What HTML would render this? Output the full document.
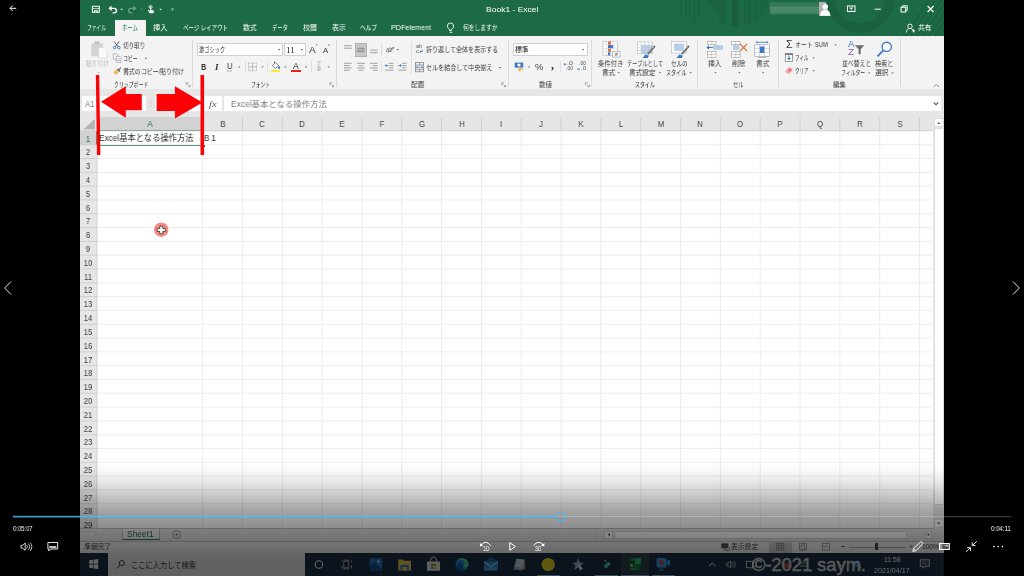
<!DOCTYPE html>
<html lang="ja"><head><meta charset="utf-8"><title>Book1 - Excel</title>
<style>
html,body{margin:0;padding:0;background:#000;}
body{width:1024px;height:576px;overflow:hidden;position:relative;font-family:'Liberation Sans','Noto Sans CJK JP',sans-serif;}
#x div,#x svg,#p svg,.ov{position:absolute;}
#x,#p{position:absolute;left:0;top:0;width:1024px;height:576px;overflow:hidden;}
#x{filter:blur(.35px);}
.t{position:absolute;white-space:nowrap;transform-origin:0 50%;will-change:transform;}
.ov{left:0;top:448px;width:1024px;height:128px;background:linear-gradient(to bottom,rgba(0,0,0,0) 10.9%,rgba(0,0,0,.025) 17.2%,rgba(0,0,0,.08) 25%,rgba(0,0,0,.17) 32.8%,rgba(0,0,0,.26) 40.6%,rgba(0,0,0,.345) 48.4%,rgba(0,0,0,.39) 53.1%,rgba(0,0,0,.445) 62.5%,rgba(0,0,0,.545) 77.3%,rgba(0,0,0,.585) 84.4%,rgba(0,0,0,.6) 90%,rgba(0,0,0,.6) 100%);}
</style></head>
<body>
<div id="x">
<div style="left:80px;top:0px;width:864px;height:36.3px;background:#1d6a47;"></div>
<div style="left:80px;top:36.3px;width:864px;height:52.4px;background:#f3f3f3;"></div>
<div style="left:80px;top:88.7px;width:864px;height:440.6px;background:#e6e6e6;"></div>
<div style="left:114.8px;top:19.5px;width:31.4px;height:17px;background:#f3f3f3;"></div>
<div style="left:819px;top:2px;width:12.2px;height:13.6px;background:#b4b4b4;"></div>
<div style="left:769.8px;top:2.3px;width:49.4px;height:13px;background:linear-gradient(to bottom,rgba(255,255,255,.07),rgba(255,255,255,.13) 40%,rgba(255,255,255,.2) 50%,rgba(255,255,255,.2) 70%,rgba(255,255,255,.1) 78%,rgba(255,255,255,.08));"></div>
<div style="left:769.8px;top:6.8px;width:49.4px;height:0.6px;background:rgba(255,255,255,.12);"></div>
<div style="left:769.8px;top:11.6px;width:49.4px;height:0.6px;background:rgba(255,255,255,.15);"></div>
<div style="left:192.0px;top:40px;width:1px;height:47px;background:#dadada;"></div>
<div style="left:197.3px;top:42.6px;width:86px;height:13.8px;background:#fff;box-sizing:border-box;border:.8px solid #d0d0d0;"></div>
<div style="left:284.2px;top:42.6px;width:22.3px;height:13.8px;background:#fff;box-sizing:border-box;border:.8px solid #d0d0d0;"></div>
<div style="left:245.1px;top:61px;width:1px;height:12px;background:#e0e0e0;"></div>
<div style="left:267.1px;top:61px;width:1px;height:12px;background:#e0e0e0;"></div>
<div style="left:270.5px;top:69.5px;width:9.5px;height:2.2px;background:#ffe83b;"></div>
<div style="left:291px;top:69.5px;width:9.5px;height:2.2px;background:#e8261a;"></div>
<div style="left:310.5px;top:61px;width:1px;height:12px;background:#e0e0e0;"></div>
<div style="left:336.4px;top:40px;width:1px;height:47px;background:#dadada;"></div>
<div style="left:354.7px;top:43.3px;width:12.3px;height:13.3px;background:#c8c8c8;box-sizing:border-box;border:1px solid #b0b0b0;"></div>
<div style="left:381.1px;top:43px;width:1px;height:13px;background:#e0e0e0;"></div>
<div style="left:381.1px;top:61px;width:1px;height:12px;background:#e0e0e0;"></div>
<div style="left:410.5px;top:42px;width:1px;height:32px;background:#e0e0e0;"></div>
<div style="left:507.7px;top:40px;width:1px;height:47px;background:#dadada;"></div>
<div style="left:513px;top:42.6px;width:74.5px;height:13.8px;background:#fff;box-sizing:border-box;border:.8px solid #d0d0d0;"></div>
<div style="left:559.8px;top:61px;width:1px;height:12px;background:#e0e0e0;"></div>
<div style="left:591.0px;top:40px;width:1px;height:47px;background:#dadada;"></div>
<div style="left:697.1px;top:40px;width:1px;height:47px;background:#dadada;"></div>
<div style="left:778.0px;top:40px;width:1px;height:47px;background:#dadada;"></div>
<div style="left:900.0px;top:39px;width:1px;height:48px;background:#dadada;"></div>
<div style="left:82.3px;top:95.8px;width:64.2px;height:15.6px;background:#fff;"></div>
<div style="left:154.5px;top:95.8px;width:67.3px;height:15.6px;background:#fff;"></div>
<div style="left:223.8px;top:95.8px;width:717.2px;height:15.6px;background:#fff;"></div>
<div style="left:80px;top:116.8px;width:852.5px;height:14.000000000000014px;background:#e6e6e6;"></div>
<div style="left:97px;top:130.9px;width:835.5px;height:397.6px;background:#fff;"></div>
<div style="left:80px;top:130.9px;width:17px;height:397.6px;background:#e6e6e6;"></div>
<div style="left:97px;top:116.8px;width:105.6px;height:14.000000000000014px;background:#d2d2d2;box-sizing:border-box;border-bottom:1px solid #217346;"></div>
<div style="left:80px;top:130.9px;width:17px;height:13.81px;background:#d2d2d2;box-sizing:border-box;border-right:1px solid #217346;"></div>
<div style="left:96.5px;top:130.4px;width:106.89999999999999px;height:15.110000000000001px;background:transparent;box-sizing:border-box;border:1px solid #3d8462;"></div>
<div style="left:201.4px;top:143.51000000000002px;width:2.6px;height:2.6px;background:#217346;border:.5px solid #fff;"></div>
<div style="left:932.5px;top:116.8px;width:11.5px;height:411.7px;background:#e6e6e6;"></div>
<div style="left:934px;top:118.4px;width:9.6px;height:8.8px;background:#fff;box-sizing:border-box;border:.5px solid #dcdcdc;"></div>
<div style="left:934.2px;top:128px;width:9.6px;height:376.8px;background:#fff;box-sizing:border-box;border:.5px solid #dcdcdc;"></div>
<div style="left:934px;top:519px;width:9.6px;height:9.2px;background:#fff;box-sizing:border-box;border:.5px solid #dcdcdc;"></div>
<div style="left:80px;top:528.5px;width:864px;height:12.3px;background:#e6e6e6;"></div>
<div style="left:80px;top:528.1px;width:852.5px;height:0.8px;background:#bdbdbd;"></div>
<div style="left:121.5px;top:528.5px;width:38px;height:11px;background:#f0f0f0;box-sizing:border-box;border-bottom:1.500px solid #217346;border-left:.6px solid #bbb;border-right:.6px solid #bbb;"></div>
<div style="left:604px;top:530.7px;width:9.2px;height:8px;background:#fff;box-sizing:border-box;border:.6px solid #d6d6d6;"></div>
<div style="left:613.5px;top:530.7px;width:293px;height:8px;background:#fff;box-sizing:border-box;border:.6px solid #d6d6d6;"></div>
<div style="left:924.7px;top:530.7px;width:7.8px;height:8px;background:#fff;box-sizing:border-box;border:.6px solid #d6d6d6;"></div>
<div style="left:80px;top:540.8px;width:864px;height:12.4px;background:#f3f3f3;"></div>
<div style="left:80px;top:540.5px;width:864px;height:0.7px;background:#c4c4c4;"></div>
<div style="left:769px;top:541.2px;width:22.6px;height:12px;background:#cfcfcf;"></div>
<div style="left:841.3px;top:546.3px;width:3.5px;height:0.8px;background:#777;"></div>
<div style="left:848.5px;top:546.5px;width:57px;height:0.6px;background:#aaa;"></div>
<div style="left:875.4px;top:543.4px;width:2.9px;height:6.8px;background:#505050;"></div>
<div style="left:80px;top:553.2px;width:864px;height:22.8px;background:#1d3347;"></div>
<div style="left:941.3px;top:553.2px;width:0.6px;height:22.8px;background:#3a4450;"></div>
<div style="left:107.5px;top:553.2px;width:197.7px;height:22.8px;background:#f2f2f2;"></div>
<div style="left:537px;top:574.8px;width:23px;height:1.2px;background:#8fc4ea;"></div>
<div style="left:594.6px;top:574.8px;width:23.4px;height:1.2px;background:#8fc4ea;"></div>
<div style="left:621px;top:553.2px;width:27.8px;height:22.8px;background:#36424e;"></div>
<div style="left:621px;top:574.8px;width:27.8px;height:1.2px;background:#8fc4ea;"></div>
<div style="left:652px;top:574.8px;width:23px;height:1.2px;background:#8fc4ea;"></div>
<svg width="1024" height="576" viewBox="0 0 1024 576" style="left:0;top:0">
<defs><clipPath id="tb"><rect x="80" y="0" width="864" height="36.3"/></clipPath></defs>
<g clip-path="url(#tb)"><circle cx="860" cy="-1.500" r="29.500" fill="none" stroke="#1a6140" stroke-width="9.500"/><path d="M681.2 0V14.4M686 0V18.5M689.4 0V14M694.2 0V23.5M699 0V17M744.8 0V25.5M748 0V24.5M750.6 0V23M754.4 0V21M757.2 0V19M760.5 0V15.5M763.2 0V12M766 0V8" stroke="#1a6241" stroke-width="1.500" fill="none"/><path d="M707 0H726V24.500L719 21.500V14z" fill="#1b6241"/><path d="M731.800 0h6.800v26.500l-6.800.5z" fill="#1a5e40"/><path d="M905 36l24-36M911 36l24-36M917 36l24-36M923 36l24-36M929 36l24-36M935 36l24-36" stroke="#1a6241" stroke-width="2"/></g>
<g fill="none" stroke="#fff"><rect x="92.400" y="6.300" width="6.900" height="6" stroke-width="1"/><path d="M92.400 8.600h6.900" stroke-width=".7"/></g><rect x="94" y="10.300" width="3.800" height="2.200" fill="#fff"/><rect x="95.400" y="11.100" width="1" height="1.400" fill="#1d6a47"/>
<path d="M110.500 8.300h3.700a2.300 2.300 0 010 4.600h-1.700" fill="none" stroke="#fff" stroke-width="1.300"/><path d="M108.300 8.300l3.300-2.600v5.200z" fill="#fff"/>
<path d="M120.400 8.800h2.400l-1.200 1.400z" fill="#fff"/>
<g opacity=".35"><path d="M134.500 8.300h-3.700a2.300 2.300 0 000 4.600h1.700" fill="none" stroke="#fff" stroke-width="1.200"/><path d="M136.700 8.300l-3.300-2.600v5.200z" fill="#fff"/><path d="M141 8.800h2l-1 1.300z" fill="#fff"/></g>
<g><circle cx="150.600" cy="7" r="1.600" fill="none" stroke="#fff" stroke-width=".7"/><path d="M150.100 6.300h1v3.500l2.300.6c.5.200.6.500.5 1l-.4 1.800h-3.700l-1.800-2.500c-.3-.5.300-1 .8-.6l1.300 1z" fill="#fff"/></g>
<path d="M159.500 8.800h2.400l-1.200 1.400z" fill="#fff"/>
<path d="M171.300 9.500h2.200l-1.100 1.400zM171.300 8h2.200v.6h-2.200z" fill="#fff" opacity=".85"/>
<g fill="#fff"><circle cx="825.300" cy="6.800" r="2.700"/><path d="M820.300 15.800c0-4 2-5.800 5-5.800s5 1.800 5 5.800z"/></g>
<g fill="none" stroke="#fff" stroke-width="1"><rect x="847.500" y="6" width="7.500" height="5.500"/><path d="M849.500 8h3.500" /><path d="M851.200 10.500v-2.500" stroke-width=".9"/></g>
<path d="M874.700 9.200h6.200" stroke="#fff" stroke-width="1"/>
<g fill="none" stroke="#fff" stroke-width="1"><rect x="901" y="7.300" width="4.700" height="4.700"/><path d="M902.500 7.300v-1.500h4.700v4.700h-1.500"/></g>
<path d="M927.600 6l6 6M933.600 6l-6 6" stroke="#fff" stroke-width="1.100"/>
<g fill="none" stroke="#fff" stroke-width=".9"><circle cx="910" cy="26.300" r="2.200"/><path d="M906.500 32.500c0-3 1.500-4 3.500-4s3.500 1 3.500 4"/><path d="M912.300 30.800h2.800M913.700 29.400v2.800"/></g>
<g fill="none" stroke="#fff" stroke-width=".9"><path d="M449.500 30.500v-1.300c-1.400-.8-2.100-1.800-2.100-3.100a3.100 3.100 0 016.200 0c0 1.300-.7 2.300-2.100 3.100v1.300z"/><path d="M449.700 32.300h2.600"/></g>
<g><rect x="91.300" y="43.300" width="11.500" height="13" fill="#d4d4d4"/><rect x="94.500" y="41.300" width="5" height="3.200" fill="#c4c4c4"/><path d="M98.500 47.500h6l2.500 2.500v8h-8.500z" fill="#fafafa" stroke="#cfcfcf" stroke-width=".6"/></g>
<path d="M97.800 72h2.400l-1.200 1.400z" fill="#bbb"/>
<g fill="none"><path d="M114.200 41.500l4 5.300M119.200 41.500l-4 5.300" stroke="#555" stroke-width=".9"/><circle cx="114.500" cy="47.600" r="1.300" stroke="#3b78c4" stroke-width=".9"/><circle cx="118.900" cy="47.600" r="1.300" stroke="#3b78c4" stroke-width=".9"/></g>
<g fill="#fff" stroke="#8a8a8a" stroke-width=".6"><path d="M113.300 53.800h3.200l1.300 1.300v4h-4.500z"/><path d="M116.300 56.300h3.200l1.500 1.500v4.500h-4.700z"/></g><path d="M117.300 59h2.500M117.300 60.500h2.500" stroke="#3b78c4" stroke-width=".5"/>
<path d="M144.700 57.800h2.400l-1.200 1.400z" fill="#555"/>
<g><path d="M113.200 72.300l3.300-2.800 2.500 2.700-3.300 2.800z" fill="#eab560"/><path d="M116.800 69.300l1-.9 2.500 2.700-1 .9z" fill="#555"/><path d="M119 69.700l2-2.200" stroke="#555" stroke-width="1.100"/></g>
<g fill="none" stroke="#777" stroke-width=".6"><path d="M186.2 85.3v-2.500h2.500"/><path d="M187.7 84.3l2.300 2.300M190.1 85.0v1.700h-1.700"/></g>
<path d="M277.800 49h2.400l-1.200 1.400z" fill="#555"/>
<path d="M300.800 49h2.400l-1.200 1.400z" fill="#555"/>
<path d="M315.800 45.300l1.100-1.400 1.100 1.400z" fill="#3b78c4"/>
<path d="M327.800 44.500h2.200l-1.100 1.400z" fill="#3b78c4"/>
<path d="M226.500 71h5.500" stroke="#777" stroke-width=".5"/>
<path d="M238.10000000000002 66.4h2.400l-1.200 1.400z" fill="#555"/>
<g fill="none" stroke="#9a9a9a" stroke-width=".7" stroke-dasharray=".8 .6"><rect x="248.500" y="63" width="8" height="7.800"/></g><path d="M252.500 63v7.800M248.500 66.900h8" stroke="#9a9a9a" stroke-width=".6"/>
<path d="M261.3 66.4h2.400l-1.200 1.400z" fill="#555"/>
<g fill="none" stroke="#666" stroke-width=".8"><path d="M272.300 65.500l3.200-3 3 3.200-3.200 2.600z" fill="#fff"/><path d="M274.500 63v-1.700"/></g><path d="M279 65.500c.8 1.200 1.200 1.800 1.200 2.400a1.100 1.100 0 01-2.200 0c0-.6.400-1.200 1-2.400z" fill="#3b78c4"/>
<path d="M284.3 66.4h2.400l-1.200 1.400z" fill="#555"/>
<path d="M304.8 66.4h2.400l-1.200 1.400z" fill="#555"/>
<path d="M327.6 66.4h2.400l-1.200 1.400z" fill="#555"/>
<g fill="none" stroke="#777" stroke-width=".6"><path d="M329.7 85.3v-2.500h2.500"/><path d="M331.2 84.3l2.300 2.300M333.59999999999997 85.0v1.700h-1.700"/></g>
<path d="M344 45.7h7.7" stroke="#8c8c8c" stroke-width=".8"/>
<path d="M344 48.2h7.7" stroke="#8c8c8c" stroke-width=".8"/>
<path d="M357 48.3h7.7" stroke="#808080" stroke-width=".8"/>
<path d="M357 50h7.7" stroke="#808080" stroke-width=".8"/>
<path d="M357 51.7h7.7" stroke="#808080" stroke-width=".8"/>
<path d="M370 50.2h7.7" stroke="#8c8c8c" stroke-width=".8"/>
<path d="M370 52.7h7.7" stroke="#8c8c8c" stroke-width=".8"/>
<path d="M388 53l5.500-5.500" stroke="#777" stroke-width=".6"/><path d="M394.200 46.700l-2.200.5 1.700 1.700z" fill="#777"/>
<path d="M396.5 48.9h2.400l-1.200 1.400z" fill="#555"/>
<path d="M344 63.3h7.7" stroke="#8c8c8c" stroke-width=".8"/>
<path d="M344 65.6h5.5" stroke="#8c8c8c" stroke-width=".8"/>
<path d="M344 67.9h7.7" stroke="#8c8c8c" stroke-width=".8"/>
<path d="M344 70.2h5.5" stroke="#8c8c8c" stroke-width=".8"/>
<path d="M357.15 63.3h7.7" stroke="#8c8c8c" stroke-width=".8"/>
<path d="M370.0 63.3h7.7" stroke="#8c8c8c" stroke-width=".8"/>
<path d="M358.5 65.6h5" stroke="#8c8c8c" stroke-width=".8"/>
<path d="M372.7 65.6h5" stroke="#8c8c8c" stroke-width=".8"/>
<path d="M357.15 67.9h7.7" stroke="#8c8c8c" stroke-width=".8"/>
<path d="M370.0 67.9h7.7" stroke="#8c8c8c" stroke-width=".8"/>
<path d="M358.5 70.2h5" stroke="#8c8c8c" stroke-width=".8"/>
<path d="M372.7 70.2h5" stroke="#8c8c8c" stroke-width=".8"/>
<path d="M388.8 63.3h4.5" stroke="#8c8c8c" stroke-width=".8"/>
<path d="M388.8 65.6h4.5" stroke="#8c8c8c" stroke-width=".8"/>
<path d="M388.8 67.9h4.5" stroke="#8c8c8c" stroke-width=".8"/>
<path d="M385 70.2h8.3" stroke="#8c8c8c" stroke-width=".8"/>
<path d="M388 65.600h-2.800" stroke="#3b78c4" stroke-width=".9"/><path d="M384.7 65.600l1.800-1.500v3z" fill="#3b78c4"/>
<path d="M402.1 63.3h4.5" stroke="#8c8c8c" stroke-width=".8"/>
<path d="M402.1 65.6h4.5" stroke="#8c8c8c" stroke-width=".8"/>
<path d="M402.1 67.9h4.5" stroke="#8c8c8c" stroke-width=".8"/>
<path d="M398.3 70.2h8.3" stroke="#8c8c8c" stroke-width=".8"/>
<path d="M398.3 65.600h2.300" stroke="#3b78c4" stroke-width=".9"/><path d="M401.8 65.600l-1.800-1.500v3z" fill="#3b78c4"/>
<path d="M420 51.700h2.300v-2" fill="none" stroke="#3b78c4" stroke-width=".8"/><path d="M419.300 51.700l1.600-1.300v2.600z" fill="#3b78c4"/>
<g fill="none" stroke="#777" stroke-width=".7"><rect x="415.300" y="62.500" width="8.300" height="9.300"/><path d="M415.300 65h8.300M415.300 69.300h8.300M419.500 62.500v2.500M419.500 69.300v2.500"/></g><path d="M416.500 67.200h6" stroke="#3b78c4" stroke-width=".7"/><path d="M416 67.200l1.400-1.100v2.200zM423 67.200l-1.400-1.100v2.200z" fill="#3b78c4"/>
<path d="M498.7 67.0h2.400l-1.200 1.400z" fill="#555"/>
<g fill="none" stroke="#777" stroke-width=".6"><path d="M501.7 85.3v-2.500h2.500"/><path d="M503.2 84.3l2.300 2.300M505.59999999999997 85.0v1.700h-1.700"/></g>
<path d="M581.6999999999999 49.0h2.400l-1.200 1.400z" fill="#555"/>
<g><rect x="514.700" y="62.600" width="8.500" height="5" fill="#3b78c4"/><ellipse cx="519" cy="65.100" rx="1.700" ry="1.500" fill="#fff"/><circle cx="519.500" cy="69.700" r="1.500" fill="#eab560"/><circle cx="521.700" cy="68.500" r="1.500" fill="#eab560" opacity=".8"/></g>
<path d="M527.8 66.4h2.400l-1.200 1.400z" fill="#555"/>
<path d="M564 64.300h2.300" stroke="#3b78c4" stroke-width=".8"/><path d="M563.600 64.300l1.500-1.200v2.400z" fill="#3b78c4"/>
<path d="M577 69.200h2.300" stroke="#3b78c4" stroke-width=".8"/><path d="M580 69.200l-1.500-1.200v2.400z" fill="#3b78c4"/>
<g fill="none" stroke="#777" stroke-width=".6"><path d="M585.4 85.3v-2.500h2.500"/><path d="M586.9 84.3l2.300 2.300M589.3 85.0v1.700h-1.700"/></g>
<g><rect x="603" y="41.200" width="14.500" height="14.400" fill="#fff" stroke="#b5b5b5" stroke-width=".6"/><path d="M603 44.800h14.500M603 48.400h14.500M603 52h14.500M606.600 41.200v14.400M610.300 41.200v14.400M614 41.200v14.400" stroke="#c8c8c8" stroke-width=".5"/><rect x="608" y="41.500" width="3" height="3.100" fill="#e0703c"/><rect x="608" y="45.100" width="5.200" height="3.100" fill="#3b78c4"/><rect x="608" y="48.700" width="3" height="3.100" fill="#e0703c"/><rect x="608" y="52.300" width="2.200" height="3.100" fill="#3b78c4"/><rect x="612.700" y="51.200" width="7.300" height="5.800" fill="#fafafa" stroke="#999" stroke-width=".6"/><path d="M614.700 53.500h3.300M614.700 55h3.300M617.200 52.500l-1.700 3.500" stroke="#555" stroke-width=".5"/></g>
<path d="M617.5999999999999 72.2h2.400l-1.200 1.400z" fill="#555"/>
<g><rect x="637.300" y="42" width="15" height="11.500" fill="#fff" stroke="#b5b5b5" stroke-width=".6"/><rect x="641" y="45" width="11.300" height="8.500" fill="#b9d0ea"/><path d="M637.300 45h15M637.300 47.800h15M637.300 50.600h15M641 42v11.500M644.800 42v11.500M648.500 42v11.500" stroke="#c5c5c5" stroke-width=".5"/><path d="M647 53.500l5.800-6.500 1.500 1.300-5.800 6.500z" fill="#777"/><path d="M653 46.800l1.200-1.400 1.300 1.200-1.100 1.400z" fill="#555"/><path d="M642.500 58l3-3.800 3.300 1.500-1 2.300z" fill="#3b78c4"/></g>
<path d="M658.8 72.2h2.400l-1.200 1.400z" fill="#555"/>
<g><rect x="671.300" y="41.500" width="15" height="11.500" fill="#fff" stroke="#b5b5b5" stroke-width=".6"/><rect x="674.500" y="44" width="9" height="6.500" fill="#b9d0ea" stroke="#9ab5d6" stroke-width=".5"/><path d="M681 53.500l5.800-6.500 1.500 1.300-5.800 6.500z" fill="#777"/><path d="M687 46.800l1.200-1.400 1.300 1.200-1.100 1.400z" fill="#555"/><path d="M676.500 58l3-3.800 3.300 1.500-1 2.300z" fill="#3b78c4"/></g>
<path d="M689.5 72.2h2.400l-1.200 1.400z" fill="#555"/>
<rect x="707.5" y="41.3" width="8.5" height="3.2" fill="#fff" stroke="#9a9a9a" stroke-width=".6"/><path d="M711.75 41.3v3.2" stroke="#9a9a9a" stroke-width=".5"/>
<rect x="707.5" y="51.3" width="8.5" height="6.3" fill="#fff" stroke="#9a9a9a" stroke-width=".6"/><path d="M711.75 51.3v6.3" stroke="#9a9a9a" stroke-width=".5"/><path d="M707.5 54.449999999999996h8.5" stroke="#9a9a9a" stroke-width=".5"/>
<rect x="713.800" y="45.800" width="8.700" height="3.400" fill="#b9d0ea" stroke="#8aa8cc" stroke-width=".5"/><path d="M718.100 45.800v3.400" stroke="#8aa8cc" stroke-width=".5"/><path d="M712.800 47.500h-4.500" stroke="#3b78c4" stroke-width="1"/><path d="M706.400 47.500l2.600-2.200v4.400z" fill="#3b78c4"/>
<path d="M714.3 72.2h2.400l-1.200 1.400z" fill="#555"/>
<rect x="731.5" y="41.3" width="8.5" height="3.2" fill="#fff" stroke="#9a9a9a" stroke-width=".6"/><path d="M735.75 41.3v3.2" stroke="#9a9a9a" stroke-width=".5"/>
<rect x="731.5" y="51.3" width="8.5" height="6.3" fill="#fff" stroke="#9a9a9a" stroke-width=".6"/><path d="M735.75 51.3v6.3" stroke="#9a9a9a" stroke-width=".5"/><path d="M731.5 54.449999999999996h8.5" stroke="#9a9a9a" stroke-width=".5"/>
<rect x="733.500" y="45.800" width="5.500" height="3.400" fill="#b9d0ea" stroke="#8aa8cc" stroke-width=".5"/><path d="M740 44l7 7M747 44l-7 7" stroke="#e0703c" stroke-width="1.100"/>
<path d="M738.1999999999999 72.2h2.400l-1.200 1.400z" fill="#555"/>
<rect x="754.800" y="44.800" width="14.500" height="11.500" fill="#fff" stroke="#9a9a9a" stroke-width=".6"/><path d="M759.600 44.800v11.500M764.500 44.800v11.500M754.800 48.600h14.500M754.800 52.500h14.500" stroke="#b5b5b5" stroke-width=".5"/><rect x="759.800" y="46.500" width="4.500" height="6.500" fill="#3b78c4"/><path d="M757 42.300h10" stroke="#3b78c4" stroke-width=".8"/><path d="M755.500 42.300l1.800-1.300v2.600zM768.500 42.300l-1.800-1.300v2.600z" fill="#3b78c4"/><path d="M758 57.500h8" stroke="#777" stroke-width=".5"/>
<path d="M762.0 72.2h2.400l-1.200 1.400z" fill="#555"/>
<path d="M834.4 44.4h2.400l-1.200 1.400z" fill="#555"/>
<rect x="785.300" y="53.500" width="7.300" height="8" fill="#fff" stroke="#777" stroke-width=".7"/><path d="M785.300 54.300h7.300" stroke="#555" stroke-width="1"/><path d="M789 55.500v3" stroke="#3b78c4" stroke-width="1"/><path d="M787 58l2 2.300 2-2.300z" fill="#3b78c4"/>
<path d="M812.4 57.4h2.400l-1.200 1.400z" fill="#555"/>
<path d="M785.200 71.500l4.300-4.300 3.200 2.700-4.300 4.300z" fill="#ee7f8f"/><path d="M785.200 71.500l1.400-1.400 3.200 2.700-1.400 1.400z" fill="#f6b6bf"/>
<path d="M812.4 70.2h2.400l-1.200 1.400z" fill="#555"/>
<path d="M855 45.300h9.300l-3.600 4v5h-2.100v-5z" fill="#6d6d6d"/>
<path d="M868.0 72.4h2.400l-1.200 1.400z" fill="#555"/>
<circle cx="886.700" cy="46.800" r="4.600" fill="#fff" stroke="#3b78c4" stroke-width="1.400"/><path d="M883.300 50.300l-5.800 6" stroke="#3b78c4" stroke-width="1.700"/>
<path d="M891.3 72.4h2.400l-1.200 1.400z" fill="#555"/>
<path d="M933.500 87l2.800-2.600 2.800 2.600" fill="none" stroke="#777" stroke-width=".8"/>
<g fill="#b0b0b0"><circle cx="150.300" cy="100.800" r=".5"/><circle cx="150.300" cy="103.300" r=".5"/><circle cx="150.300" cy="105.800" r=".5"/></g>
<path d="M933.700 102.300l2.300 2.300 2.300-2.300" fill="none" stroke="#555" stroke-width="1.100"/>
<path d="M83.500 129.300h11.300v-10.300z" fill="#b4b4b4"/>
<path d="M202.60 130.9V528.5M242.43 130.9V528.5M282.26 130.9V528.5M322.09 130.9V528.5M361.92 130.9V528.5M401.75 130.9V528.5M441.58 130.9V528.5M481.41 130.9V528.5M521.24 130.9V528.5M561.07 130.9V528.5M600.90 130.9V528.5M640.73 130.9V528.5M680.56 130.9V528.5M720.39 130.9V528.5M760.22 130.9V528.5M800.05 130.9V528.5M839.88 130.9V528.5M879.71 130.9V528.5M919.54 130.9V528.5M97 144.71H932.5M97 158.52H932.5M97 172.33H932.5M97 186.14H932.5M97 199.95H932.5M97 213.76H932.5M97 227.57H932.5M97 241.38H932.5M97 255.19H932.5M97 269.00H932.5M97 282.81H932.5M97 296.62H932.5M97 310.43H932.5M97 324.24H932.5M97 338.05H932.5M97 351.86H932.5M97 365.67H932.5M97 379.48H932.5M97 393.29H932.5M97 407.10H932.5M97 420.91H932.5M97 434.72H932.5M97 448.53H932.5M97 462.34H932.5M97 476.15H932.5M97 489.96H932.5M97 503.77H932.5M97 517.58H932.5" stroke="#e9e9e9" stroke-width=".8" fill="none"/>
<path d="M202.60 117.8V130.8M242.43 117.8V130.8M282.26 117.8V130.8M322.09 117.8V130.8M361.92 117.8V130.8M401.75 117.8V130.8M441.58 117.8V130.8M481.41 117.8V130.8M521.24 117.8V130.8M561.07 117.8V130.8M600.90 117.8V130.8M640.73 117.8V130.8M680.56 117.8V130.8M720.39 117.8V130.8M760.22 117.8V130.8M800.05 117.8V130.8M839.88 117.8V130.8M879.71 117.8V130.8M919.54 117.8V130.8M80 144.71H97M80 158.52H97M80 172.33H97M80 186.14H97M80 199.95H97M80 213.76H97M80 227.57H97M80 241.38H97M80 255.19H97M80 269.00H97M80 282.81H97M80 296.62H97M80 310.43H97M80 324.24H97M80 338.05H97M80 351.86H97M80 365.67H97M80 379.48H97M80 393.29H97M80 407.10H97M80 420.91H97M80 434.72H97M80 448.53H97M80 462.34H97M80 476.15H97M80 489.96H97M80 503.77H97M80 517.58H97M80 531.39H97M97 130.9V528.5M80 130.8H932.5" stroke="#c9c9c9" stroke-width=".8" fill="none"/>
<path d="M937 124l1.800-2.100 1.800 2.100z" fill="#666"/>
<path d="M937 522.600l1.800 2.100 1.800-2.100z" fill="#666"/>
<path d="M96.200 532.800l-1.600 1.700 1.600 1.700zM103.200 532.800l1.600 1.700-1.600 1.700z" fill="#c4c4c4"/>
<circle cx="176.700" cy="534.500" r="4" fill="none" stroke="#777" stroke-width=".7"/><path d="M174.700 534.500h4M176.700 532.500v4" stroke="#777" stroke-width=".7"/>
<g fill="#999"><circle cx="596.600" cy="532" r=".5"/><circle cx="596.600" cy="534.500" r=".5"/><circle cx="596.600" cy="537" r=".5"/></g>
<path d="M609.800 532.800l-2.100 1.800 2.100 1.800z" fill="#555"/>
<path d="M927.600 532.800l2.100 1.800-2.100 1.800z" fill="#555"/>
<rect x="721.300" y="543.300" width="7" height="5" fill="#555"/><path d="M723.500 549.800h3" stroke="#555" stroke-width=".8"/><circle cx="728" cy="549.200" r="1.700" fill="#f3f3f3" stroke="#555" stroke-width=".7"/>
<g fill="none" stroke="#858585" stroke-width=".7"><rect x="776.300" y="543.300" width="7.500" height="6.800"/><path d="M776.300 545.600h7.500M776.300 547.900h7.500M778.800 543.300v6.800M781.300 543.300v6.800"/><rect x="799.500" y="543.300" width="7" height="6.800"/><rect x="801.300" y="545" width="3.400" height="5.100"/><rect x="822.500" y="543.300" width="7" height="6.800"/><path d="M826 543.300v3.300h3.500M822.500 546.600h3.500" stroke-dasharray="1 .5"/></g>
<g fill="#fff"><path d="M89.300 560.300l3.600-.5v3.900h-3.600zM93.600 559.700l4.600-.7v4.700h-4.600zM89.300 564.400h3.600v3.900l-3.600-.5zM93.600 564.400h4.600v4.700l-4.600-.7z"/></g>
<circle cx="121.800" cy="563" r="2.600" fill="none" stroke="#333" stroke-width=".9"/><path d="M119.800 565.200l-3 3.300" stroke="#333" stroke-width="1"/>
<circle cx="318.900" cy="564.500" r="3.800" fill="none" stroke="#fff" stroke-width="1.100"/>
<g fill="none" stroke="#b8b8b8" stroke-width=".9"><rect x="343.800" y="561.300" width="5" height="6.500"/><path d="M342 560.500v1.200M342 566.300v2.300M351.500 560.500v2M351.500 565v3.500M343.500 560.200h5.500M343.500 568.900h5.500" /></g>
<rect x="369.700" y="558.300" width="12.500" height="12.500" fill="#2b78d0"/><path d="M369.700 570.800v-4l4.500-4.500 8 7.500v1z" fill="#1a4f9a"/><circle cx="378.500" cy="561.500" r="1.200" fill="#d8e8fa"/>
<path d="M398.300 559.500h4.500l1 1.300h7.200v9.700h-12.700z" fill="#f5c84c"/><rect x="400.500" y="564.800" width="8.300" height="5.700" fill="#2f7fd6"/><rect x="402.300" y="567" width="4.700" height="3.500" fill="#f5c84c"/>
<path d="M427 561.500h13v9.300h-13z" fill="#e8e8e8"/><path d="M430.500 561.500v-1.500a3 3 0 016 0v1.500" fill="none" stroke="#e8e8e8" stroke-width="1"/><rect x="431" y="563.800" width="2.300" height="2.300" fill="#f25022"/><rect x="433.800" y="563.800" width="2.300" height="2.300" fill="#7fba00"/><rect x="431" y="566.600" width="2.300" height="2.300" fill="#00a4ef"/><rect x="433.800" y="566.600" width="2.300" height="2.300" fill="#ffb900"/>
<circle cx="462" cy="564.500" r="6.500" fill="#1f86d8"/><path d="M462 558a6.500 6.500 0 016.500 6.200c0 2-1.300 3.300-3.200 3.300-1.500 0-2.300-.8-2.300-1.500.9-.5 1.500-1.500 1.500-2.700 0-2-1.800-3.500-4-3.500-1.500 0-2.800.6-3.700 1.600a6.500 6.500 0 015.200-3.400z" fill="#4fd08a"/><path d="M460.500 563c1.800 0 3 1 3 2.300 0 1-.5 1.500-1 1.700-.3 1.500 1 2.500 2.800 2.500-1 .9-2.200 1.400-3.600 1.400-3 0-5-2.200-5-4.500 0-2 1.700-3.400 3.800-3.400z" fill="#0f5ea8"/>
<rect x="484" y="561.500" width="14" height="9" fill="#2f8fd8"/><path d="M484 561.500l7-4.500 7 4.500z" fill="#1b62a8"/><path d="M484 561.700l7 5 7-5" fill="none" stroke="#e6eef8" stroke-width="1"/><path d="M484 570.500l7-5 7 5z" fill="#5aaeea" opacity=".7"/>
<path d="M516 558.800l8.500 1-1.500 10.700-9.500-1z" fill="#8fb8c8"/><path d="M517.200 558.800l7.300 1-1 8-8-1z" fill="#c9e2ea"/><path d="M522 568.500l2.500-8.700.8 9.700z" fill="#c8a070"/>
<circle cx="548.200" cy="564.500" r="6.600" fill="#e8dd22"/>
<path d="M578 558l1.500 4.500 4.500.3-3.500 2.800 1.300 4.700-3.800-2.700-3.800 2.700 1.300-4.700-3.500-2.800 4.500-.3z" fill="#9fb8dc"/><path d="M578.500 563l4.500 6-2.200.3-.8 2z" fill="#eee"/>
<rect x="600" y="558" width="13" height="13" rx="2" fill="#222c36"/><path d="M603.500 566l5-4.500 2.300 2.500-5 4.500z" fill="#35d6c0"/><path d="M604 561l1.300-1.300 1.300 1.300-1.300 1.300z" fill="#35d6c0"/>
<rect x="630.500" y="558.300" width="10.500" height="12" rx="1" fill="#21a366"/><rect x="635.700" y="558.300" width="5.300" height="6" fill="#33c481"/><rect x="635.700" y="564.300" width="5.300" height="6" fill="#107c41"/><rect x="627.800" y="560.800" width="7" height="7" rx=".8" fill="#185c37"/>
<rect x="656.500" y="558" width="10" height="9.500" rx="1.500" fill="#3aa0e8"/><path d="M666.500 561.500l3.500-2v6.500l-3.500-2z" fill="#3aa0e8"/><circle cx="661.500" cy="562.700" r="2.300" fill="#e03a3a"/><path d="M661.500 567.500v2.300M658.500 570h6" stroke="#3aa0e8" stroke-width=".9"/>
<path d="M709 566l3.200-3 3.200 3" fill="none" stroke="#e8e8e8" stroke-width="1"/>
<path d="M726.700 563h1.800l2.300-2v7l-2.300-2h-1.800z" fill="none" stroke="#e8e8e8" stroke-width=".8"/><path d="M732.300 562.300a3 3 0 010 4.400M733.800 561a5 5 0 010 7" fill="none" stroke="#e8e8e8" stroke-width=".7"/>
<g fill="none" stroke="#e8e8e8" stroke-width=".8"><rect x="746.500" y="561.300" width="6" height="6.500"/><path d="M752.500 563h4M752.500 566h4"/></g>
<path d="M920.300 559.800h9v6.500h-4.300l-2 2v-2h-2.700z" fill="none" stroke="#e8e8e8" stroke-width=".9"/><path d="M922 562h5.500M922 564h5.500" stroke="#e8e8e8" stroke-width=".6"/>
<circle cx="787" cy="565.500" r="2.500" fill="#d04a3a"/><path d="M800 563h6M800 566h6" stroke="#e8e8e8" stroke-width=".8"/><circle cx="856" cy="564" r="3" fill="#3a78d0"/><path d="M838 561l4 6" stroke="#e8e8e8" stroke-width=".8"/><path d="M858 566l3 2" stroke="#e0a030" stroke-width="1.500"/>
<path d="M95.800 75L99.200 75L100.400 155L97 155z" fill="#fb0207"/>
<path d="M200.500 75h3.600v80h-3.600z" fill="#fb0207"/>
<path d="M101 101.700L125.800 86.200V94.100H141.800V110.300H125.800V117.700z" fill="#fb0207"/>
<path d="M202.500 102.400L174.900 86.300V94.100H156.600V111H174.900V118.600z" fill="#fb0207"/>
<circle cx="161.250" cy="229.700" r="7.200" fill="#f58a83"/><path d="M159.800 226.200h3v2.300h2.600v3h-2.600v2.300h-3v-2.300h-2.600v-3h2.600z" fill="#fff" stroke="#1a1a1a" stroke-width=".7"/>
</svg>
<span class="t" style="left:486.00px;top:4.83px;font-size:7.3px;line-height:10.95px;color:#fff;transform:scaleX(1.166);">Book1  -  Excel</span>
<span class="t" style="left:918.30px;top:23.23px;font-size:7.3px;line-height:10.95px;color:#fff;transform:scaleX(0.918);">共有</span>
<span class="t" style="left:87.30px;top:23.23px;font-size:7.3px;line-height:10.95px;color:#fff;transform:scaleX(0.641);">ファイル</span>
<span class="t" style="left:122.00px;top:23.23px;font-size:7.3px;line-height:10.95px;color:#1d6a47;transform:scaleX(0.738);">ホーム</span>
<span class="t" style="left:153.30px;top:23.23px;font-size:7.3px;line-height:10.95px;color:#fff;transform:scaleX(0.973);">挿入</span>
<span class="t" style="left:182.50px;top:23.23px;font-size:7.3px;line-height:10.95px;color:#fff;transform:scaleX(0.747);">ページ レイアウト</span>
<span class="t" style="left:243.00px;top:23.23px;font-size:7.3px;line-height:10.95px;color:#fff;transform:scaleX(0.946);">数式</span>
<span class="t" style="left:272.00px;top:23.23px;font-size:7.3px;line-height:10.95px;color:#fff;transform:scaleX(0.731);">データ</span>
<span class="t" style="left:302.50px;top:23.23px;font-size:7.3px;line-height:10.95px;color:#fff;transform:scaleX(0.959);">校閲</span>
<span class="t" style="left:331.50px;top:23.23px;font-size:7.3px;line-height:10.95px;color:#fff;transform:scaleX(0.959);">表示</span>
<span class="t" style="left:360.00px;top:23.23px;font-size:7.3px;line-height:10.95px;color:#fff;transform:scaleX(0.777);">ヘルプ</span>
<span class="t" style="left:391.30px;top:23.23px;font-size:7.3px;line-height:10.95px;color:#fff;transform:scaleX(0.986);">PDFelement</span>
<span class="t" style="left:462.50px;top:23.23px;font-size:7.3px;line-height:10.95px;color:#fff;transform:scaleX(0.788);">何をしますか</span>
<span class="t" style="left:85.90px;top:59.02px;font-size:7.3px;line-height:10.95px;color:#b9b9b9;transform:scaleX(0.781);">貼り付け</span>
<span class="t" style="left:123.40px;top:40.52px;font-size:7.3px;line-height:10.95px;color:#3a3a3a;transform:scaleX(0.761);">切り取り</span>
<span class="t" style="left:123.40px;top:53.52px;font-size:7.3px;line-height:10.95px;color:#3a3a3a;transform:scaleX(0.667);">コピー</span>
<span class="t" style="left:123.40px;top:67.33px;font-size:7.3px;line-height:10.95px;color:#3a3a3a;transform:scaleX(0.812);">書式のコピー/貼り付け</span>
<span class="t" style="left:114.00px;top:79.83px;font-size:7.3px;line-height:10.95px;color:#3a3a3a;transform:scaleX(0.670);">クリップボード</span>
<span class="t" style="left:198.80px;top:44.92px;font-size:7.3px;line-height:10.95px;color:#222;transform:scaleX(0.718);">游ゴシック</span>
<span class="t" style="left:286.00px;top:43.60px;font-size:8.8px;line-height:13.200000000000001px;color:#222;font-family:'Liberation Serif','Noto Serif CJK SC',serif;transform:scaleX(1.025);">11</span>
<span class="t" style="left:309.30px;top:43.15px;font-size:9.4px;line-height:14.100000000000001px;color:#3a3a3a;transform:scaleX(1.069);">A</span>
<span class="t" style="left:322.80px;top:45.35px;font-size:7.4px;line-height:11.100000000000001px;color:#3a3a3a;transform:scaleX(1.053);">A</span>
<span class="t" style="left:201.00px;top:60.60px;font-size:8.8px;line-height:13.200000000000001px;color:#333;font-weight:bold;transform:scaleX(0.818);">B</span>
<span class="t" style="left:214.80px;top:60.60px;font-size:8.8px;line-height:13.200000000000001px;color:#333;font-family:'Liberation Serif','Noto Serif CJK SC',serif;font-weight:bold;font-style:italic;transform:scaleX(1.018);">I</span>
<span class="t" style="left:226.50px;top:60.30px;font-size:8.8px;line-height:13.200000000000001px;color:#333;transform:scaleX(0.865);">U</span>
<span class="t" style="left:293.00px;top:59.60px;font-size:8.4px;line-height:12.600000000000001px;color:#333;transform:scaleX(1.037);">A</span>
<span class="t" style="left:317.00px;top:61.00px;font-size:4px;line-height:6.0px;color:#555;transform:scaleX(0.875);">ア</span>
<span class="t" style="left:316.80px;top:65.35px;font-size:5px;line-height:7.5px;color:#888;transform:scaleX(0.798);">亜</span>
<span class="t" style="left:250.80px;top:80.03px;font-size:7.3px;line-height:10.95px;color:#3a3a3a;transform:scaleX(0.651);">フォント</span>
<span class="t" style="left:386.00px;top:44.62px;font-size:6.5px;line-height:9.75px;color:#555;font-style:italic;transform:scaleX(0.898);">ab</span>
<span class="t" style="left:416.30px;top:43.20px;font-size:4.8px;line-height:7.199999999999999px;color:#555;transform:scaleX(1.123);">ab</span>
<span class="t" style="left:416.30px;top:48.20px;font-size:4.8px;line-height:7.199999999999999px;color:#555;transform:scaleX(1.247);">c</span>
<span class="t" style="left:425.90px;top:44.73px;font-size:7.3px;line-height:10.95px;color:#3a3a3a;transform:scaleX(0.827);">折り返して全体を表示する</span>
<span class="t" style="left:425.90px;top:62.62px;font-size:7.3px;line-height:10.95px;color:#3a3a3a;transform:scaleX(0.830);">セルを結合して中央揃え</span>
<span class="t" style="left:411.00px;top:80.23px;font-size:7.3px;line-height:10.95px;color:#3a3a3a;transform:scaleX(0.911);">配置</span>
<span class="t" style="left:514.50px;top:44.92px;font-size:7.3px;line-height:10.95px;color:#222;transform:scaleX(0.925);">標準</span>
<span class="t" style="left:535.30px;top:60.08px;font-size:9.5px;line-height:14.25px;color:#444;transform:scaleX(0.958);">%</span>
<span class="t" style="left:550.70px;top:55.70px;font-size:12px;line-height:18.0px;color:#333;font-family:'Liberation Serif','Noto Serif CJK SC',serif;font-weight:bold;transform:scaleX(0.867);">,</span>
<span class="t" style="left:566.50px;top:61.42px;font-size:4.5px;line-height:6.75px;color:#555;transform:scaleX(1.567);">.0</span>
<span class="t" style="left:565.50px;top:66.33px;font-size:4.5px;line-height:6.75px;color:#555;transform:scaleX(1.101);">.00</span>
<span class="t" style="left:578.50px;top:61.42px;font-size:4.5px;line-height:6.75px;color:#555;transform:scaleX(1.117);">.00</span>
<span class="t" style="left:580.50px;top:66.33px;font-size:4.5px;line-height:6.75px;color:#555;transform:scaleX(1.328);">.0</span>
<span class="t" style="left:539.00px;top:80.23px;font-size:7.3px;line-height:10.95px;color:#3a3a3a;transform:scaleX(0.891);">数値</span>
<span class="t" style="left:598.00px;top:58.82px;font-size:7.3px;line-height:10.95px;color:#3a3a3a;transform:scaleX(0.867);">条件付き</span>
<span class="t" style="left:602.00px;top:67.62px;font-size:7.3px;line-height:10.95px;color:#3a3a3a;transform:scaleX(0.904);">書式</span>
<span class="t" style="left:626.60px;top:58.82px;font-size:7.3px;line-height:10.95px;color:#3a3a3a;transform:scaleX(0.718);">テーブルとして</span>
<span class="t" style="left:628.80px;top:67.62px;font-size:7.3px;line-height:10.95px;color:#3a3a3a;transform:scaleX(0.904);">書式設定</span>
<span class="t" style="left:671.00px;top:58.82px;font-size:7.3px;line-height:10.95px;color:#3a3a3a;transform:scaleX(0.763);">セルの</span>
<span class="t" style="left:666.00px;top:67.62px;font-size:7.3px;line-height:10.95px;color:#3a3a3a;transform:scaleX(0.696);">スタイル</span>
<span class="t" style="left:634.70px;top:80.33px;font-size:7.3px;line-height:10.95px;color:#3a3a3a;transform:scaleX(0.675);">スタイル</span>
<span class="t" style="left:707.90px;top:58.82px;font-size:7.3px;line-height:10.95px;color:#3a3a3a;transform:scaleX(0.925);">挿入</span>
<span class="t" style="left:731.60px;top:58.82px;font-size:7.3px;line-height:10.95px;color:#3a3a3a;transform:scaleX(0.918);">削除</span>
<span class="t" style="left:755.50px;top:58.82px;font-size:7.3px;line-height:10.95px;color:#3a3a3a;transform:scaleX(0.925);">書式</span>
<span class="t" style="left:732.80px;top:80.33px;font-size:7.3px;line-height:10.95px;color:#3a3a3a;transform:scaleX(0.719);">セル</span>
<span class="t" style="left:785.80px;top:37.23px;font-size:10.5px;line-height:15.75px;color:#333;transform:scaleX(1.015);">Σ</span>
<span class="t" style="left:795.30px;top:40.02px;font-size:7.3px;line-height:10.95px;color:#3a3a3a;transform:scaleX(0.820);">オート SUM</span>
<span class="t" style="left:795.30px;top:53.02px;font-size:7.3px;line-height:10.95px;color:#3a3a3a;transform:scaleX(0.607);">フィル</span>
<span class="t" style="left:795.30px;top:65.83px;font-size:7.3px;line-height:10.95px;color:#3a3a3a;transform:scaleX(0.621);">クリア</span>
<span class="t" style="left:847.80px;top:38.40px;font-size:8.8px;line-height:13.200000000000001px;color:#3b78c4;transform:scaleX(1.089);">A</span>
<span class="t" style="left:848.00px;top:46.40px;font-size:8.8px;line-height:13.200000000000001px;color:#8e5ba8;transform:scaleX(1.116);">Z</span>
<span class="t" style="left:841.70px;top:58.82px;font-size:7.3px;line-height:10.95px;color:#3a3a3a;transform:scaleX(0.798);">並べ替えと</span>
<span class="t" style="left:840.80px;top:67.83px;font-size:7.3px;line-height:10.95px;color:#3a3a3a;transform:scaleX(0.666);">フィルター</span>
<span class="t" style="left:875.00px;top:58.82px;font-size:7.3px;line-height:10.95px;color:#3a3a3a;transform:scaleX(0.836);">検索と</span>
<span class="t" style="left:874.70px;top:67.83px;font-size:7.3px;line-height:10.95px;color:#3a3a3a;transform:scaleX(0.932);">選択</span>
<span class="t" style="left:832.50px;top:80.33px;font-size:7.3px;line-height:10.95px;color:#3a3a3a;transform:scaleX(0.877);">編集</span>
<span class="t" style="left:84.50px;top:97.77px;font-size:8.7px;line-height:13.049999999999999px;color:#777;transform:scaleX(0.893);">A1</span>
<span class="t" style="left:208.50px;top:97.72px;font-size:8.5px;line-height:12.75px;color:#555;font-family:'Liberation Serif','Noto Serif CJK SC',serif;font-style:italic;transform:scaleX(1.221);">fx</span>
<span class="t" style="left:231.00px;top:97.53px;font-size:8.5px;line-height:12.75px;color:#7a7a7a;transform:scaleX(0.989);">Excel基本となる操作方法</span>
<span class="t" style="left:149.80px;top:117.67px;font-size:9.1px;line-height:13.649999999999999px;color:#1d6a47;transform-origin:50% 50%;transform:translateX(-50%) scaleX(0.85);">A</span>
<span class="t" style="left:222.51px;top:117.53px;font-size:9.3px;line-height:13.950000000000001px;color:#3e3e3e;transform-origin:50% 50%;transform:translateX(-50%) scaleX(0.85);">B</span>
<span class="t" style="left:262.34px;top:117.53px;font-size:9.3px;line-height:13.950000000000001px;color:#3e3e3e;transform-origin:50% 50%;transform:translateX(-50%) scaleX(0.85);">C</span>
<span class="t" style="left:302.17px;top:117.53px;font-size:9.3px;line-height:13.950000000000001px;color:#3e3e3e;transform-origin:50% 50%;transform:translateX(-50%) scaleX(0.85);">D</span>
<span class="t" style="left:342.00px;top:117.53px;font-size:9.3px;line-height:13.950000000000001px;color:#3e3e3e;transform-origin:50% 50%;transform:translateX(-50%) scaleX(0.85);">E</span>
<span class="t" style="left:381.83px;top:117.53px;font-size:9.3px;line-height:13.950000000000001px;color:#3e3e3e;transform-origin:50% 50%;transform:translateX(-50%) scaleX(0.85);">F</span>
<span class="t" style="left:421.66px;top:117.53px;font-size:9.3px;line-height:13.950000000000001px;color:#3e3e3e;transform-origin:50% 50%;transform:translateX(-50%) scaleX(0.85);">G</span>
<span class="t" style="left:461.50px;top:117.53px;font-size:9.3px;line-height:13.950000000000001px;color:#3e3e3e;transform-origin:50% 50%;transform:translateX(-50%) scaleX(0.85);">H</span>
<span class="t" style="left:501.32px;top:117.53px;font-size:9.3px;line-height:13.950000000000001px;color:#3e3e3e;transform-origin:50% 50%;transform:translateX(-50%) scaleX(0.85);">I</span>
<span class="t" style="left:541.15px;top:117.53px;font-size:9.3px;line-height:13.950000000000001px;color:#3e3e3e;transform-origin:50% 50%;transform:translateX(-50%) scaleX(0.85);">J</span>
<span class="t" style="left:580.99px;top:117.53px;font-size:9.3px;line-height:13.950000000000001px;color:#3e3e3e;transform-origin:50% 50%;transform:translateX(-50%) scaleX(0.85);">K</span>
<span class="t" style="left:620.81px;top:117.53px;font-size:9.3px;line-height:13.950000000000001px;color:#3e3e3e;transform-origin:50% 50%;transform:translateX(-50%) scaleX(0.85);">L</span>
<span class="t" style="left:660.64px;top:117.53px;font-size:9.3px;line-height:13.950000000000001px;color:#3e3e3e;transform-origin:50% 50%;transform:translateX(-50%) scaleX(0.85);">M</span>
<span class="t" style="left:700.48px;top:117.53px;font-size:9.3px;line-height:13.950000000000001px;color:#3e3e3e;transform-origin:50% 50%;transform:translateX(-50%) scaleX(0.85);">N</span>
<span class="t" style="left:740.30px;top:117.53px;font-size:9.3px;line-height:13.950000000000001px;color:#3e3e3e;transform-origin:50% 50%;transform:translateX(-50%) scaleX(0.85);">O</span>
<span class="t" style="left:780.13px;top:117.53px;font-size:9.3px;line-height:13.950000000000001px;color:#3e3e3e;transform-origin:50% 50%;transform:translateX(-50%) scaleX(0.85);">P</span>
<span class="t" style="left:819.97px;top:117.53px;font-size:9.3px;line-height:13.950000000000001px;color:#3e3e3e;transform-origin:50% 50%;transform:translateX(-50%) scaleX(0.85);">Q</span>
<span class="t" style="left:859.79px;top:117.53px;font-size:9.3px;line-height:13.950000000000001px;color:#3e3e3e;transform-origin:50% 50%;transform:translateX(-50%) scaleX(0.85);">R</span>
<span class="t" style="left:899.62px;top:117.53px;font-size:9.3px;line-height:13.950000000000001px;color:#3e3e3e;transform-origin:50% 50%;transform:translateX(-50%) scaleX(0.85);">S</span>
<span class="t" style="left:88.40px;top:131.56px;font-size:9.4px;line-height:14.100000000000001px;color:#1d6a47;transform-origin:50% 50%;transform:translateX(-50%) scaleX(0.82);">1</span>
<span class="t" style="left:88.40px;top:145.37px;font-size:9.4px;line-height:14.100000000000001px;color:#3e3e3e;transform-origin:50% 50%;transform:translateX(-50%) scaleX(0.82);">2</span>
<span class="t" style="left:88.40px;top:159.18px;font-size:9.4px;line-height:14.100000000000001px;color:#3e3e3e;transform-origin:50% 50%;transform:translateX(-50%) scaleX(0.82);">3</span>
<span class="t" style="left:88.40px;top:172.99px;font-size:9.4px;line-height:14.100000000000001px;color:#3e3e3e;transform-origin:50% 50%;transform:translateX(-50%) scaleX(0.82);">4</span>
<span class="t" style="left:88.40px;top:186.80px;font-size:9.4px;line-height:14.100000000000001px;color:#3e3e3e;transform-origin:50% 50%;transform:translateX(-50%) scaleX(0.82);">5</span>
<span class="t" style="left:88.40px;top:200.61px;font-size:9.4px;line-height:14.100000000000001px;color:#3e3e3e;transform-origin:50% 50%;transform:translateX(-50%) scaleX(0.82);">6</span>
<span class="t" style="left:88.40px;top:214.42px;font-size:9.4px;line-height:14.100000000000001px;color:#3e3e3e;transform-origin:50% 50%;transform:translateX(-50%) scaleX(0.82);">7</span>
<span class="t" style="left:88.40px;top:228.23px;font-size:9.4px;line-height:14.100000000000001px;color:#3e3e3e;transform-origin:50% 50%;transform:translateX(-50%) scaleX(0.82);">8</span>
<span class="t" style="left:88.40px;top:242.04px;font-size:9.4px;line-height:14.100000000000001px;color:#3e3e3e;transform-origin:50% 50%;transform:translateX(-50%) scaleX(0.82);">9</span>
<span class="t" style="left:88.40px;top:255.85px;font-size:9.4px;line-height:14.100000000000001px;color:#3e3e3e;transform-origin:50% 50%;transform:translateX(-50%) scaleX(0.82);">10</span>
<span class="t" style="left:88.40px;top:269.65px;font-size:9.4px;line-height:14.100000000000001px;color:#3e3e3e;transform-origin:50% 50%;transform:translateX(-50%) scaleX(0.82);">11</span>
<span class="t" style="left:88.40px;top:283.47px;font-size:9.4px;line-height:14.100000000000001px;color:#3e3e3e;transform-origin:50% 50%;transform:translateX(-50%) scaleX(0.82);">12</span>
<span class="t" style="left:88.40px;top:297.27px;font-size:9.4px;line-height:14.100000000000001px;color:#3e3e3e;transform-origin:50% 50%;transform:translateX(-50%) scaleX(0.82);">13</span>
<span class="t" style="left:88.40px;top:311.09px;font-size:9.4px;line-height:14.100000000000001px;color:#3e3e3e;transform-origin:50% 50%;transform:translateX(-50%) scaleX(0.82);">14</span>
<span class="t" style="left:88.40px;top:324.89px;font-size:9.4px;line-height:14.100000000000001px;color:#3e3e3e;transform-origin:50% 50%;transform:translateX(-50%) scaleX(0.82);">15</span>
<span class="t" style="left:88.40px;top:338.71px;font-size:9.4px;line-height:14.100000000000001px;color:#3e3e3e;transform-origin:50% 50%;transform:translateX(-50%) scaleX(0.82);">16</span>
<span class="t" style="left:88.40px;top:352.51px;font-size:9.4px;line-height:14.100000000000001px;color:#3e3e3e;transform-origin:50% 50%;transform:translateX(-50%) scaleX(0.82);">17</span>
<span class="t" style="left:88.40px;top:366.33px;font-size:9.4px;line-height:14.100000000000001px;color:#3e3e3e;transform-origin:50% 50%;transform:translateX(-50%) scaleX(0.82);">18</span>
<span class="t" style="left:88.40px;top:380.13px;font-size:9.4px;line-height:14.100000000000001px;color:#3e3e3e;transform-origin:50% 50%;transform:translateX(-50%) scaleX(0.82);">19</span>
<span class="t" style="left:88.40px;top:393.95px;font-size:9.4px;line-height:14.100000000000001px;color:#3e3e3e;transform-origin:50% 50%;transform:translateX(-50%) scaleX(0.82);">20</span>
<span class="t" style="left:88.40px;top:407.75px;font-size:9.4px;line-height:14.100000000000001px;color:#3e3e3e;transform-origin:50% 50%;transform:translateX(-50%) scaleX(0.82);">21</span>
<span class="t" style="left:88.40px;top:421.57px;font-size:9.4px;line-height:14.100000000000001px;color:#3e3e3e;transform-origin:50% 50%;transform:translateX(-50%) scaleX(0.82);">22</span>
<span class="t" style="left:88.40px;top:435.38px;font-size:9.4px;line-height:14.100000000000001px;color:#3e3e3e;transform-origin:50% 50%;transform:translateX(-50%) scaleX(0.82);">23</span>
<span class="t" style="left:88.40px;top:449.19px;font-size:9.4px;line-height:14.100000000000001px;color:#3e3e3e;transform-origin:50% 50%;transform:translateX(-50%) scaleX(0.82);">24</span>
<span class="t" style="left:88.40px;top:463.00px;font-size:9.4px;line-height:14.100000000000001px;color:#3e3e3e;transform-origin:50% 50%;transform:translateX(-50%) scaleX(0.82);">25</span>
<span class="t" style="left:88.40px;top:476.81px;font-size:9.4px;line-height:14.100000000000001px;color:#3e3e3e;transform-origin:50% 50%;transform:translateX(-50%) scaleX(0.82);">26</span>
<span class="t" style="left:88.40px;top:490.62px;font-size:9.4px;line-height:14.100000000000001px;color:#3e3e3e;transform-origin:50% 50%;transform:translateX(-50%) scaleX(0.82);">27</span>
<span class="t" style="left:88.40px;top:504.43px;font-size:9.4px;line-height:14.100000000000001px;color:#3e3e3e;transform-origin:50% 50%;transform:translateX(-50%) scaleX(0.82);">28</span>
<span class="t" style="left:88.40px;top:518.24px;font-size:9.4px;line-height:14.100000000000001px;color:#3e3e3e;transform-origin:50% 50%;transform:translateX(-50%) scaleX(0.82);">29</span>
<span class="t" style="left:99.00px;top:132.05px;font-size:8.6px;line-height:12.899999999999999px;color:#2c2c2c;transform:scaleX(0.963);">Excel基本となる操作方法</span>
<span class="t" style="left:203.50px;top:132.05px;font-size:8.6px;line-height:12.899999999999999px;color:#2c2c2c;transform:scaleX(0.930);">B 1</span>
<span class="t" style="left:127.00px;top:528.27px;font-size:8.3px;line-height:12.450000000000001px;color:#1d6a47;transform:scaleX(1.019);">Sheet1</span>
<span class="t" style="left:84.40px;top:542.25px;font-size:7px;line-height:10.5px;color:#444;transform:scaleX(0.964);">準備完了</span>
<span class="t" style="left:731.40px;top:542.30px;font-size:6.8px;line-height:10.2px;color:#444;">表示設定</span>
<span class="t" style="left:910.50px;top:540.80px;font-size:8px;line-height:12.0px;color:#666;transform-origin:50% 50%;transform:translateX(-50%) scaleX(1);">+</span>
<span class="t" style="left:921.70px;top:542.10px;font-size:7.2px;line-height:10.8px;color:#333;transform:scaleX(0.924);">100%</span>
<span class="t" style="left:131.00px;top:559.50px;font-size:8px;line-height:12.0px;color:#333;transform:scaleX(0.906);">ここに入力して検索</span>
<span class="t" style="left:629.80px;top:560.67px;font-size:5.5px;line-height:8.25px;color:#fff;font-weight:bold;transform:scaleX(0.980);">x</span>
<span class="t" style="left:883.50px;top:555.10px;font-size:6.8px;line-height:10.2px;color:#fff;">11:58</span>
<span class="t" style="left:873.60px;top:565.90px;font-size:6.8px;line-height:10.2px;color:#fff;transform:scaleX(1.049);">2021/04/17</span>
<span class="t" style="left:751.80px;top:551.42px;font-size:18.5px;line-height:27.75px;color:#fff;opacity:0.85;-webkit-text-stroke:.45px #fff;transform:scaleX(0.987);">©-2021 saym.</span>
</div>
<div class="ov"></div>
<div id="p">
<svg width="1024" height="576" viewBox="0 0 1024 576" style="left:0;top:0">
<path d="M10 8.300h6.200M12.800 5.500l-2.800 2.800 2.800 2.800" fill="none" stroke="#fff" stroke-width="1"/>
<path d="M11 281.500l-6.300 6.500 6.300 6.500" fill="none" stroke="#e8e8e8" stroke-width="1"/>
<path d="M1013 281.500l6.300 6.500-6.300 6.500" fill="none" stroke="#e8e8e8" stroke-width="1"/>
<path d="M13 516.700H1011.300" stroke="rgba(255,255,255,.3)" stroke-width=".9"/>
<path d="M13 516.700H556.400" stroke="rgba(62,186,255,.76)" stroke-width="1.800"/>
<circle cx="561" cy="516.700" r="4.600" fill="none" stroke="rgba(62,186,255,.8)" stroke-width="1.300"/>
<path d="M21 545.300h1.700l2.500-2.300v7.400l-2.500-2.300h-1.700z" fill="none" stroke="#e4e4e4" stroke-width=".9"/><path d="M26.700 545a2.400 2.400 0 010 3.400M28.400 543.600a4.400 4.400 0 010 6.200M30.100 542.400a6.200 6.200 0 010 8.600" fill="none" stroke="#e4e4e4" stroke-width=".8"/>
<path d="M47.900 542.500h9.800v6.500h-7l-1.900 2v-2h-.9z" fill="none" stroke="#e4e4e4" stroke-width="1"/><rect x="49.200" y="546" width="7.200" height="2.200" fill="#bbb"/>
<path d="M481 545.300q4.500-6.300 9.700.3" fill="none" stroke="#fff" stroke-width="1"/><path d="M479.800 543l.2 3.600 3.300-1z" fill="#fff"/>
<path d="M543.200 545.300q-4.500-6.300-9.700.3" fill="none" stroke="#fff" stroke-width="1"/><path d="M544.400 543l-.2 3.600-3.300-1z" fill="#fff"/>
<path d="M509.800 542.700l5.600 3.850-5.600 3.850z" fill="none" stroke="#fff" stroke-width="1"/>
<path d="M912.800 551.400l.9-2.900 6.500-6.300a1.300 1.300 0 011.900 0l.3.300a1.300 1.300 0 010 1.900l-6.500 6.300z" fill="none" stroke="#fff" stroke-width=".9"/><path d="M913.700 548.600l1.900 1.900" stroke="#fff" stroke-width=".7"/>
<rect x="939.500" y="543.500" width="9.800" height="6" fill="#555" stroke="#fff" stroke-width="1"/><path d="M943.500 545.300h4.500v1.200z" fill="#fff"/><rect x="940" y="544" width="2.300" height="5" fill="#999"/>
<path d="M976.800 541.300l-4.300 4.100M972.200 542.400v3.200h3.300M965.900 551.900l4.300-4.100M967.200 547.700h3.300v3.200" fill="none" stroke="#fff" stroke-width=".9"/>
<g fill="#fff"><circle cx="994" cy="546.600" r=".8"/><circle cx="998.200" cy="546.600" r=".8"/><circle cx="1002.400" cy="546.600" r=".8"/></g>
</svg>
<span class="t" style="left:13.00px;top:524.33px;font-size:6.5px;line-height:9.75px;color:#fff;transform:scaleX(0.899);">0:05:07</span>
<span class="t" style="left:990.80px;top:524.33px;font-size:6.5px;line-height:9.75px;color:#fff;transform:scaleX(0.933);">0:04:11</span>
<span class="t" style="left:482.50px;top:544.33px;font-size:6.9px;line-height:10.350000000000001px;color:#fff;transform:scaleX(0.821);">10</span>
<span class="t" style="left:535.30px;top:544.33px;font-size:6.9px;line-height:10.350000000000001px;color:#fff;transform:scaleX(0.808);">30</span>
</div>
</body></html>
